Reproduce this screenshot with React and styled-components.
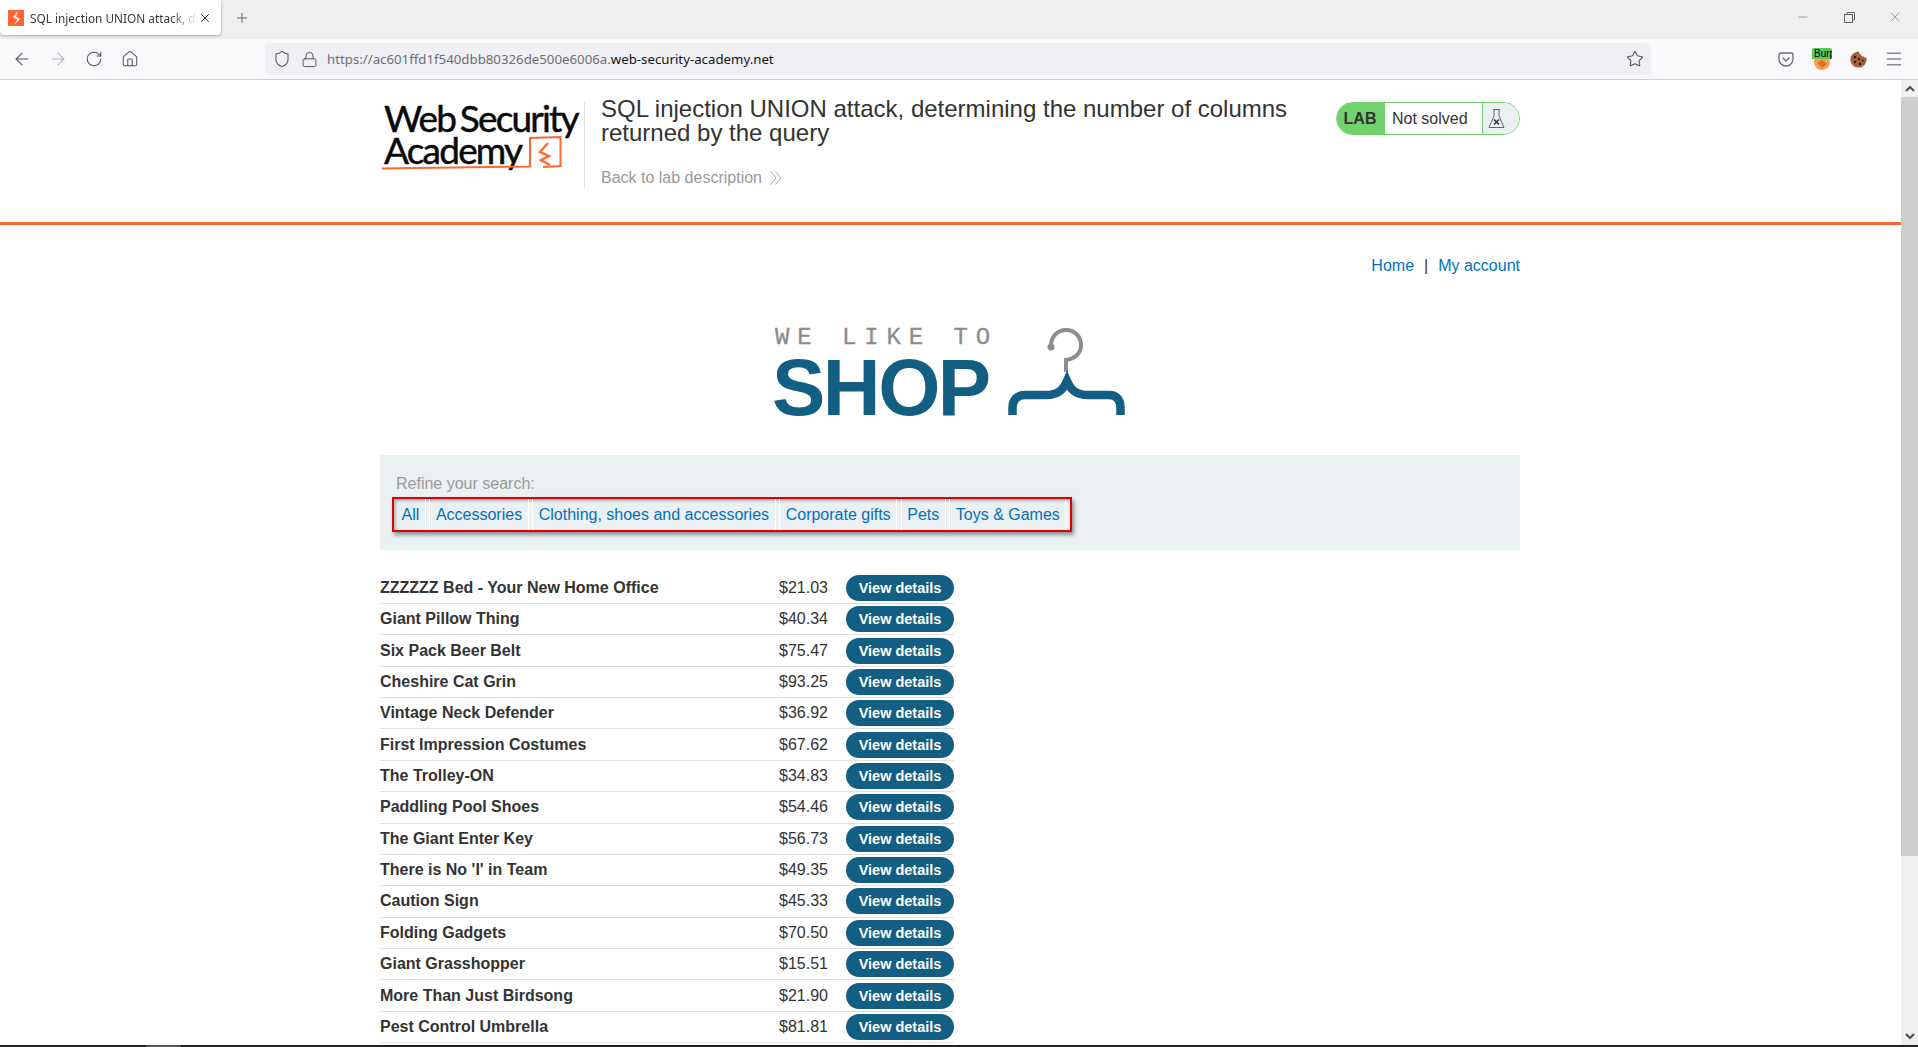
import styled, { createGlobalStyle } from "styled-components";
import { ArrowLeft, ArrowRight, RotateCw, Home, Shield, Lock, Star, Menu, Plus, X, Minus } from "lucide-react";

const products = [
  ["ZZZZZZ Bed - Your New Home Office", "$21.03"],
  ["Giant Pillow Thing", "$40.34"],
  ["Six Pack Beer Belt", "$75.47"],
  ["Cheshire Cat Grin", "$93.25"],
  ["Vintage Neck Defender", "$36.92"],
  ["First Impression Costumes", "$67.62"],
  ["The Trolley-ON", "$34.83"],
  ["Paddling Pool Shoes", "$54.46"],
  ["The Giant Enter Key", "$56.73"],
  ["There is No 'I' in Team", "$49.35"],
  ["Caution Sign", "$45.33"],
  ["Folding Gadgets", "$70.50"],
  ["Giant Grasshopper", "$15.51"],
  ["More Than Just Birdsong", "$21.90"],
  ["Pest Control Umbrella", "$81.81"],
];

const categories = ["All", "Accessories", "Clothing, shoes and accessories", "Corporate gifts", "Pets", "Toys & Games"];

export default function App() {
  return (
    <>
      <GlobalStyle />
      <Screen>
        <TabStrip>
          <Tab>
            <Favicon viewBox="0 0 16 16">
              <rect width="16" height="16" fill="#ff6633" />
              <path d="M10 1 L5 7 L9.5 9.5 L6 15 L12 9 L8 6.5 Z" fill="#fff" />
            </Favicon>
            <TabTitle>SQL injection UNION attack, determining</TabTitle>
            <X size={14} color="#222" strokeWidth={1.6} />
          </Tab>
          <NewTab><Plus size={16} color="#555" strokeWidth={1.3} /></NewTab>
          <WindowControls>
            <WindowButton><Minus size={14} color="#666" strokeWidth={1} /></WindowButton>
            <WindowButton>
              <svg width="11" height="11" viewBox="0 0 11 11" fill="none" stroke="#666">
                <rect x="0.5" y="2.5" width="8" height="8" />
                <path d="M3 2.5V0.5H10.5V8H8.5" />
              </svg>
            </WindowButton>
            <WindowButton><X size={16} color="#666" strokeWidth={0.9} /></WindowButton>
          </WindowControls>
        </TabStrip>

        <Toolbar>
          <ToolButton><ArrowLeft size={20} color="#55555f" strokeWidth={1.3} /></ToolButton>
          <ToolButton><ArrowRight size={20} color="#b5b5ba" strokeWidth={1.3} /></ToolButton>
          <ToolButton><RotateCw size={18} color="#55555f" strokeWidth={1.4} /></ToolButton>
          <ToolButton><Home size={18} color="#55555f" strokeWidth={1.4} /></ToolButton>
          <AddressBar>
            <Shield size={18} color="#55555f" strokeWidth={1.4} />
            <Lock size={17} color="#55555f" strokeWidth={1.4} />
            <Url>
              https://ac601ffd1f540dbb80326de500e6006a.<strong>web-security-academy.net</strong>
            </Url>
            <StarSlot><Star size={18} color="#55555f" strokeWidth={1.4} /></StarSlot>
          </AddressBar>
          <ToolButton>
            <svg width="16" height="15" viewBox="0 0 16 15" fill="none" stroke="#6a6a72" strokeWidth="1.3">
              <path d="M2.5 1H13.5C14.3 1 15 1.7 15 2.5V7C15 11 11.8 14 8 14C4.2 14 1 11 1 7V2.5C1 1.7 1.7 1 2.5 1Z" />
              <path d="M5 6L8 9L11 6" strokeLinecap="round" />
            </svg>
          </ToolButton>
          <ToolButton>
            <BurpIcon>
              <svg width="16" height="16" viewBox="0 0 16 16">
                <circle cx="8" cy="8" r="8" fill="#f5a050" />
                <path d="M3 9L8 6L13 10L8 14Z" fill="#e2701e" />
              </svg>
              <BurpLabel>Burp</BurpLabel>
            </BurpIcon>
          </ToolButton>
          <ToolButton>
            <svg width="17" height="17" viewBox="0 0 17 17">
              <path d="M9 0.6C8.6 2.2 9.6 3.4 11 3.4C11.2 5 12.6 5.8 14 5.4C14.4 6.4 15.4 6.8 16.4 6.6C17.4 11.8 13.4 16.6 8.5 16.6C4 16.6 0.4 13 0.4 8.5C0.4 4.2 4.4 0.4 9 0.6Z" fill="#a5633c" />
              <circle cx="5" cy="6" r="1.3" fill="#2a1a12" />
              <circle cx="9" cy="8" r="1.2" fill="#2a1a12" />
              <circle cx="5" cy="11" r="1.2" fill="#2a1a12" />
              <circle cx="10" cy="13" r="1.3" fill="#2a1a12" />
              <circle cx="13" cy="9.5" r="1" fill="#2a1a12" />
            </svg>
          </ToolButton>
          <ToolButton><Menu size={20} color="#55555f" strokeWidth={1.2} /></ToolButton>
        </Toolbar>

        <Viewport>
          <Page>
            <LabHeader>
              <LabHeaderInner>
                <AcademyLogo>
                  <AcademyName>Web Security<br />Academy</AcademyName>
                  <AcademyMark viewBox="0 0 204 86" fill="none" stroke="#ff6633" strokeWidth="2">
                    <path d="M2 66.5L150 64.5V36L180.5 35V64L163 65" />
                    <path d="M168 41L160 50L169 54L161 58L170 63" strokeWidth="2.4" />
                  </AcademyMark>
                </AcademyLogo>
                <LabTitle>
                  <h2>SQL injection UNION attack, determining the number of columns returned by the query</h2>
                  <BackLink>
                    Back to lab description
                    <svg width="12" height="14" viewBox="0 0 12 14" fill="none" stroke="#aaa">
                      <path d="M0.5 0.5L6 7L0.5 13.5M5.5 0.5L11 7L5.5 13.5" />
                    </svg>
                  </BackLink>
                </LabTitle>
                <LabStatus>
                  <LabTag>LAB</LabTag>
                  <LabState>Not solved</LabState>
                  <LabIcon>
                    <svg width="17" height="21" viewBox="0 0 17 21" fill="none" stroke="#666" strokeWidth="1">
                      <path d="M5 1.5H12M6 1.5V8L1 19.5H16L11 8V1.5" />
                      <path d="M6 11.5L11 16.5M11 11.5L6 16.5" stroke="#333" strokeWidth="1.6" />
                    </svg>
                  </LabIcon>
                </LabStatus>
              </LabHeaderInner>
            </LabHeader>

            <Container>
              <TopNav>
                <a>Home</a>
                <span>|</span>
                <a>My account</a>
              </TopNav>

              <ShopLogo>
                <ShopWords>
                  <WeLike>WE LIKE TO</WeLike>
                  <Shop>SHOP</Shop>
                </ShopWords>
                <Hanger viewBox="0 0 117 88" fill="none">
                  <path d="M43 18C43 8 50 2 58 2C67 2 73 9 73 17C73 26 66 31 58 32V44" stroke="#8c8c8c" strokeWidth="4" />
                  <circle cx="43" cy="19" r="3.5" fill="#8c8c8c" />
                  <path d="M4.5 87V80C4.5 72 9 67 17 67H38C50 67 55 62 59 53C63 62 68 67 80 67H101C109 67 112.5 72 112.5 80V87" stroke="#135f83" strokeWidth="8.5" />
                </Hanger>
              </ShopLogo>

              <FilterPanel>
                <FilterLabel>Refine your search:</FilterLabel>
                <FilterLinks>
                  {categories.map((c) => (
                    <FilterLink key={c}>{c}</FilterLink>
                  ))}
                </FilterLinks>
              </FilterPanel>

              <ProductList>
                {products.map(([name, price]) => (
                  <ProductRow key={name}>
                    <ProductName>{name}</ProductName>
                    <ProductPrice>{price}</ProductPrice>
                    <ViewButton>View details</ViewButton>
                  </ProductRow>
                ))}
              </ProductList>
            </Container>
          </Page>

          <Scrollbar>
            <ScrollArrow>
              <svg width="10" height="7" viewBox="0 0 10 7" fill="none" stroke="#505050" strokeWidth="2.2"><path d="M1 6L5 2L9 6" /></svg>
            </ScrollArrow>
            <ScrollThumb />
            <ScrollTrack />
            <ScrollArrow>
              <svg width="10" height="7" viewBox="0 0 10 7" fill="none" stroke="#505050" strokeWidth="2.2"><path d="M1 1L5 5L9 1" /></svg>
            </ScrollArrow>
          </Scrollbar>
        </Viewport>

        <Taskbar><TaskbarItem /></Taskbar>
      </Screen>
    </>
  );
}

const GlobalStyle = createGlobalStyle`
  html, body {
    margin: 0;
    height: 100%;
    overflow: hidden;
    background: #ffffff;
  }
  * {
    box-sizing: border-box;
  }
`;

const Screen = styled.div`
  width: 1918px;
  height: 1047px;
  display: flex;
  flex-direction: column;
  overflow: hidden;
  font-family: "Liberation Sans", Arial, sans-serif;
  font-size: 16px;
  color: #333333;
`;

const TabStrip = styled.div`
  height: 39px;
  flex: none;
  display: flex;
  align-items: flex-start;
  background: #efeff0;
`;

const Tab = styled.div`
  width: 221px;
  height: 35px;
  display: flex;
  align-items: center;
  padding: 0 9px 0 8px;
  background: #ffffff;
  border-radius: 0 0 4px 4px;
  box-shadow: 0 1px 3px rgba(0, 0, 0, 0.3);
`;

const Favicon = styled.svg`
  width: 16px;
  height: 16px;
  flex: none;
`;

const TabTitle = styled.span`
  flex: 1;
  margin-left: 6px;
  font-family: "Noto Sans", sans-serif;
  font-size: 11.8px;
  color: #3a3a3f;
  white-space: nowrap;
  overflow: hidden;
  -webkit-mask-image: linear-gradient(to right, #000 84%, transparent 100%);
  mask-image: linear-gradient(to right, #000 84%, transparent 100%);
`;

const NewTab = styled.div`
  width: 30px;
  height: 35px;
  margin-left: 6px;
  display: flex;
  align-items: center;
  justify-content: center;
`;

const WindowControls = styled.div`
  margin-left: auto;
  display: flex;
`;

const WindowButton = styled.div`
  width: 46px;
  height: 34px;
  display: flex;
  align-items: center;
  justify-content: center;
`;

const Toolbar = styled.div`
  height: 41px;
  flex: none;
  display: flex;
  align-items: center;
  padding: 0 6px 0 4px;
  background: #f9f9fb;
  border-bottom: 1px solid #cfcfd2;
`;

const ToolButton = styled.div`
  width: 36px;
  height: 32px;
  flex: none;
  display: flex;
  align-items: center;
  justify-content: center;
`;

const AddressBar = styled.div`
  flex: 1;
  height: 32px;
  margin: 0 117px;
  padding: 0 7px 0 8px;
  display: flex;
  align-items: center;
  gap: 9.5px;
  background: #f0f0f4;
  border-radius: 4px;
`;

const Url = styled.div`
  font-family: "Noto Sans", sans-serif;
  font-size: 13.25px;
  color: #6d6d73;
  white-space: nowrap;
  strong {
    font-weight: 400;
    color: #15141a;
  }
`;

const StarSlot = styled.div`
  margin-left: auto;
  display: flex;
`;

const BurpIcon = styled.div`
  position: relative;
  width: 20px;
  height: 22px;
  display: flex;
  align-items: flex-end;
  justify-content: center;
`;

const BurpLabel = styled.div`
  position: absolute;
  top: 0;
  left: 0;
  width: 20px;
  height: 11px;
  overflow: hidden;
  padding-left: 2px;
  background: #5cc85c;
  border-radius: 2px 2px 0 0;
  font-size: 10px;
  line-height: 11px;
  color: #000000;
`;

const Viewport = styled.div`
  flex: 1;
  min-height: 0;
  display: flex;
`;

const Page = styled.div`
  flex: 1;
  min-width: 0;
  overflow: hidden;
`;

const LabHeader = styled.header`
  height: 145px;
  padding: 17px 1px 0 0;
  border-bottom: 3px solid #ff6633;
`;

const LabHeaderInner = styled.div`
  width: 1140px;
  margin: 0 auto;
  display: flex;
  align-items: flex-start;
`;

const AcademyLogo = styled.div`
  position: relative;
  width: 205px;
  height: 86px;
  margin-top: 5px;
  padding-left: 4px;
  flex: none;
  border-right: 1px solid #e2e2e2;
`;

const AcademyName = styled.div`
  font-family: Lato, sans-serif;
  font-size: 37px;
  line-height: 32px;
  letter-spacing: -1.8px;
  word-spacing: -3px;
  color: #0a0a0a;
  -webkit-text-stroke: 0.5px #0a0a0a;
  white-space: nowrap;
`;

const AcademyMark = styled.svg`
  position: absolute;
  top: 0;
  left: 0;
  width: 204px;
  height: 86px;
`;

const LabTitle = styled.div`
  width: 730px;
  padding-left: 16px;
  flex: none;
  h2 {
    margin: 0;
    font-size: 24px;
    font-weight: 400;
    line-height: 24px;
    color: #333333;
  }
`;

const BackLink = styled.div`
  margin-top: 23px;
  display: flex;
  align-items: center;
  gap: 8px;
  line-height: 20px;
  color: #999999;
`;

const LabStatus = styled.div`
  width: 184px;
  height: 33px;
  margin: 5px 0 0 auto;
  display: flex;
  border: 1.5px solid #70d16d;
  border-radius: 16.5px;
  overflow: hidden;
`;

const LabTag = styled.div`
  width: 48px;
  display: flex;
  align-items: center;
  justify-content: center;
  padding-right: 2px;
  background: #70d16d;
  font-weight: 700;
  color: #333333;
`;

const LabState = styled.div`
  width: 98px;
  display: flex;
  align-items: center;
  padding-left: 7px;
  background: #ffffff;
  border-right: 1px solid #70d16d;
  color: #333333;
`;

const LabIcon = styled.div`
  flex: 1;
  display: flex;
  align-items: center;
  padding-left: 5px;
  background: #ebf0f2;
`;

const Container = styled.main`
  width: 1140px;
  margin: 0 0 0 380px;
`;

const TopNav = styled.nav`
  padding-top: 31px;
  height: 51px;
  display: flex;
  justify-content: flex-end;
  gap: 10px;
  line-height: 20px;
  color: #333333;
  a {
    color: #0071bc;
  }
`;

const ShopLogo = styled.div`
  width: 350px;
  margin: 52px auto 0;
  display: flex;
  align-items: flex-start;
  justify-content: space-between;
`;

const ShopWords = styled.div`
  display: flex;
  flex-direction: column;
  margin-left: -3px;
`;

const WeLike = styled.div`
  margin-left: 3px;
  font-family: "Liberation Mono", monospace;
  font-size: 24px;
  line-height: 20px;
  letter-spacing: 7.9px;
  color: #8c8c8c;
  -webkit-text-stroke: 0.3px #8c8c8c;
  white-space: nowrap;
`;

const Shop = styled.div`
  font-size: 80px;
  font-weight: 700;
  line-height: 80px;
  letter-spacing: -2.5px;
  color: #135f83;
`;

const Hanger = styled.svg`
  width: 117px;
  height: 88px;
  flex: none;
`;

const FilterPanel = styled.section`
  height: 95px;
  margin-top: 27px;
  padding: 19px 12px 0;
  background: #ebf0f2;
`;

const FilterLabel = styled.div`
  margin-left: 4px;
  line-height: 20px;
  color: #999999;
`;

const FilterLinks = styled.div`
  display: inline-flex;
  height: 35px;
  margin-top: 3px;
  padding-right: 4px;
  gap: 3.6px;
  border: 2px solid #e00000;
  box-shadow: 2px 3px 4px rgba(0, 0, 0, 0.4), inset 2px 2px 3px rgba(0, 0, 0, 0.25);
`;

const FilterLink = styled.a`
  display: flex;
  align-items: center;
  padding: 0 5.5px;
  border-left: 1px solid #ffffff;
  border-right: 1px solid #ffffff;
  color: #0071bc;
  white-space: nowrap;
  &:first-child {
    padding-left: 6.5px;
    border-left-color: transparent;
  }
`;

const ProductList = styled.div`
  width: 574px;
  margin-top: 22.7px;
`;

const ProductRow = styled.div`
  height: 31.36px;
  display: grid;
  grid-template-columns: 1fr auto 108px;
  column-gap: 18px;
  align-items: center;
  border-bottom: 1px solid #e0e0e0;
`;

const ProductName = styled.div`
  font-weight: 700;
  color: #333333;
`;

const ProductPrice = styled.div`
  color: #333333;
`;

const ViewButton = styled.button`
  height: 26px;
  padding: 0;
  border: 0;
  border-radius: 13px;
  background: #135f83;
  color: #ffffff;
  font-family: inherit;
  font-size: 14.5px;
  font-weight: 700;
`;

const Scrollbar = styled.div`
  width: 17px;
  flex: none;
  display: flex;
  flex-direction: column;
  background: #f0f0f0;
`;

const ScrollArrow = styled.div`
  height: 17px;
  flex: none;
  display: flex;
  align-items: center;
  justify-content: center;
`;

const ScrollThumb = styled.div`
  height: 759px;
  flex: none;
  background: #cdcdcd;
`;

const ScrollTrack = styled.div`
  flex: 1;
`;

const Taskbar = styled.div`
  height: 2px;
  flex: none;
  padding-left: 146px;
  background: #222222;
`;

const TaskbarItem = styled.div`
  width: 35px;
  height: 2px;
  background: #555555;
`;
